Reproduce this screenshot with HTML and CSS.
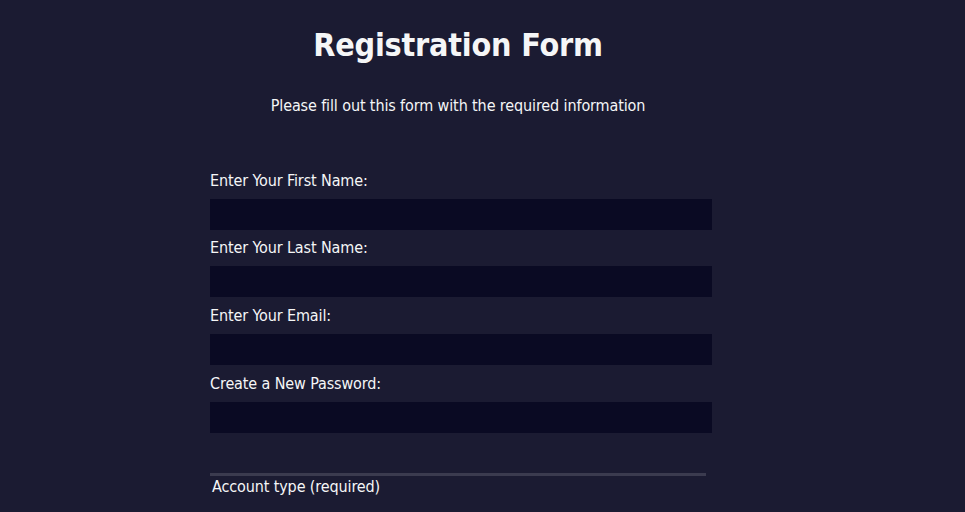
FILE: index.html
```html
<!DOCTYPE html>
<html lang="en">
<head>
<meta charset="utf-8">
<title>Registration Form</title>
<link rel="stylesheet" href="styles.css">
</head>
<body>
<main class="page">
  <h1 class="title">Registration Form</h1>
  <p class="intro">Please fill out this form with the required information</p>
  <form class="form">
    <fieldset class="group">
      <label class="field">Enter Your First Name: <input class="input" type="text"></label>
      <label class="field">Enter Your Last Name: <input class="input" type="text"></label>
      <label class="field">Enter Your Email: <input class="input" type="email"></label>
      <label class="field">Create a New Password: <input class="input" type="password"></label>
    </fieldset>
    <fieldset class="group group-account">
      <legend class="legend">Account type (required)</legend>
    </fieldset>
  </form>
</main>
</body>
</html>
```

FILE: styles.css
```css
html, body {
  margin: 0;
  padding: 0;
  background-color: #1b1b32;
  color: #f5f6f7;
  font-family: "DejaVu Sans Condensed", "DejaVu Sans", sans-serif;
  font-size: 16px;
  letter-spacing: -0.12px;
}

.page {
  width: 916px;
  padding-top: 26px;
}

.title {
  margin: 0 auto 31px;
  text-align: center;
  font-size: 32px;
  line-height: 39px;
  font-weight: bold;
  letter-spacing: -0.2px;
}

.intro {
  margin: 0 auto;
  text-align: center;
  line-height: 19px;
}

.form {
  width: 496px;
  margin: 15px auto 0;
}

.group {
  border: none;
  margin: 0;
  padding: 32px 0;
  min-width: 0;
  border-bottom: 3px solid #3b3b4f;
}

.field {
  display: block;
  margin: 8px 0;
  padding-top: 1.5px;
  line-height: 18.7px;
}

.input {
  display: block;
  box-sizing: content-box;
  width: 100%;
  height: 25px;
  margin: 8.5px 0 0;
  padding: 2px;
  border: 1px solid #0a0a23;
  background-color: #0a0a23;
  color: #ffffff;
  font: inherit;
}

.group-account {
  border-bottom: none;
  padding-top: 0;
}

.legend {
  padding: 0 2px;
  line-height: 21px;
}
```
